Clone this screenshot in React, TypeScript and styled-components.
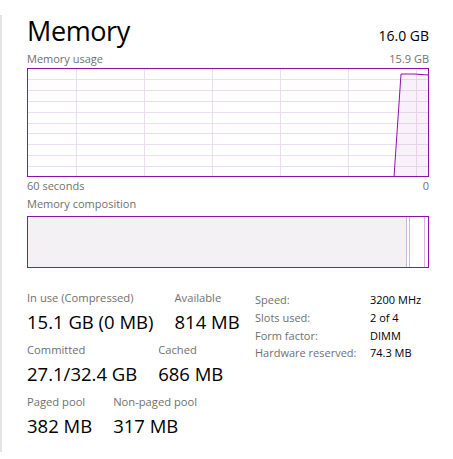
import React from 'react'
import styled, { createGlobalStyle } from 'styled-components'

const GlobalStyle = createGlobalStyle`
    body {
        margin: 0;
        background: #ffffff;
        font-family: "Open Sans", "Noto Sans", sans-serif;
        color: #000000;
    }
`

const PURPLE = '#8b12ae'

// x offset in px, value in px from the bottom of the chart
const usage = [
    [0, 0], [367, 0], [374, 103], [387, 103], [402, 102]
]

const UsageChart: React.FC = () => {
    const w = 402
    const h = 109
    const verticals = [49, 117, 185, 253, 321, 389]
    const horizontals = [1, 2, 3, 4, 5, 6, 7, 8, 9].map(i => i * h / 10)
    const pts = usage.map(([x, v]) => `${x},${h - v}`).join(' ')
    const area = `0,${h} ${pts} ${w},${h}`
    return(
        <svg width={w} height={h} viewBox={`0 0 ${w} ${h}`} style={{ display: 'block' }}>
            <rect x="0" y="0" width={w} height={h} fill="#ffffff" />
            {
                horizontals.map((y, i) => (
                    <line key={'h' + i} x1="0" x2={w} y1={Math.round(y) + 0.5} y2={Math.round(y) + 0.5} stroke="#eeddf2" strokeWidth="1" />
                ))
            }
            {
                verticals.map((x, i) => (
                    <line key={'v' + i} x1={x + 0.5} x2={x + 0.5} y1="0" y2={h} stroke="#eeddf2" strokeWidth="1" />
                ))
            }
            <polygon points={area} fill="rgba(139,18,174,0.06)" />
            <polyline points={pts} fill="none" stroke={PURPLE} strokeWidth="1" />
            <rect x="0.5" y="0.5" width={w - 1} height={h - 1} fill="none" stroke={PURPLE} strokeWidth="1" />
        </svg>
    )
}

const App: React.FC = () => {
    return(
        <>
            <GlobalStyle />
            <Panel>
                <Header>
                    <Title>Memory</Title>
                    <Total>16.0 GB</Total>
                </Header>
                <Caption>
                    <span>Memory usage</span>
                    <span>15.9 GB</span>
                </Caption>
                <UsageChart />
                <Caption>
                    <span>60 seconds</span>
                    <span>0</span>
                </Caption>
                <Caption $tall>
                    <span>Memory composition</span>
                </Caption>
                <CompositionBar>
                    <Segment $width={380} $fill="#f3f1f4" $edge />
                    <Segment $width={2} $edge />
                    <Segment $width={14} $edge />
                    <Segment $width={3} />
                </CompositionBar>
                <StatsArea>
                    <LeftStats>
                        <StatRow>
                            <Stat>
                                <StatLabel>In use (Compressed)</StatLabel>
                                <StatValue>15.1 GB (0 MB)</StatValue>
                            </Stat>
                            <Stat>
                                <StatLabel>Available</StatLabel>
                                <StatValue>814 MB</StatValue>
                            </Stat>
                        </StatRow>
                        <StatRow>
                            <Stat>
                                <StatLabel>Committed</StatLabel>
                                <StatValue>27.1/32.4 GB</StatValue>
                            </Stat>
                            <Stat>
                                <StatLabel>Cached</StatLabel>
                                <StatValue>686 MB</StatValue>
                            </Stat>
                        </StatRow>
                        <StatRow>
                            <Stat>
                                <StatLabel>Paged pool</StatLabel>
                                <StatValue>382 MB</StatValue>
                            </Stat>
                            <Stat>
                                <StatLabel>Non-paged pool</StatLabel>
                                <StatValue>317 MB</StatValue>
                            </Stat>
                        </StatRow>
                    </LeftStats>
                    <InfoGrid>
                        <InfoLabel>Speed:</InfoLabel>
                        <InfoValue>3200 MHz</InfoValue>
                        <InfoLabel>Slots used:</InfoLabel>
                        <InfoValue>2 of 4</InfoValue>
                        <InfoLabel>Form factor:</InfoLabel>
                        <InfoValue>DIMM</InfoValue>
                        <InfoLabel>Hardware reserved:</InfoLabel>
                        <InfoValue>74.3 MB</InfoValue>
                    </InfoGrid>
                </StatsArea>
            </Panel>
        </>
    )
}

const Panel = styled.div`
    margin-top: 15px;
    height: 437px;
    width: 402px;
    border-left: 2px solid #e3e3e3;
    padding-left: 25px;
    box-sizing: content-box;
`
const Header = styled.div`
    display: flex;
    justify-content: space-between;
    align-items: baseline;
    height: 35px;
`
const Title = styled.div`
    font-size: 27px;
    line-height: 32px;
    letter-spacing: -0.4px;
`
const Total = styled.div`
    font-size: 14px;
    line-height: 20px;
`
const Caption = styled.div<{ $tall?: boolean }>`
    display: flex;
    justify-content: space-between;
    font-size: 11px;
    line-height: 18px;
    height: ${p => p.$tall ? '20px' : '18px'};
    color: #707070;
`
const CompositionBar = styled.div`
    display: flex;
    height: 50px;
    width: 400px;
    border: 1px solid ${PURPLE};
    margin-top: 1px;
`
const Segment = styled.div<{ $width: number; $fill?: string; $edge?: boolean }>`
    width: ${p => p.$width}px;
    background: ${p => p.$fill || '#ffffff'};
    border-right: ${p => p.$edge ? '1px solid #d7b3e1' : 'none'};
`
const StatsArea = styled.div`
    display: flex;
    margin-top: 22px;
`
const LeftStats = styled.div`
    width: 228px;
    display: flex;
    flex-direction: column;
    gap: 4px;
`
const StatRow = styled.div`
    display: flex;
    gap: 21px;
`
const Stat = styled.div`
    display: flex;
    flex-direction: column;
`
const StatLabel = styled.div`
    font-size: 11.2px;
    line-height: 16px;
    color: #707070;
`
const StatValue = styled.div`
    font-size: 18.5px;
    line-height: 32px;
    color: #000000;
`
const InfoGrid = styled.div`
    display: grid;
    grid-template-columns: 115px auto;
    grid-auto-rows: 17.8px;
    align-content: start;
    font-size: 11px;
    padding-top: 1px;
`
const InfoLabel = styled.div`
    color: #707070;
    line-height: 17.8px;
`
const InfoValue = styled.div`
    color: #000000;
    line-height: 17.8px;
`

export default App
